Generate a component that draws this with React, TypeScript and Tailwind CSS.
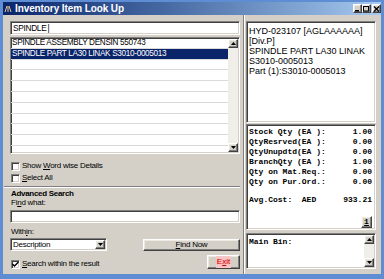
import React from "react";

const sunken =
  "border border-t-[#808080] border-l-[#808080] border-b-white border-r-white shadow-[inset_1px_1px_0_#404040,inset_-1px_-1px_0_#d4d0c8]";
const raised =
  "border border-t-white border-l-white border-b-[#404040] border-r-[#404040] shadow-[inset_-1px_-1px_0_#808080,inset_1px_1px_0_#ece9e2]";

function Arrow({ up }: { up?: boolean }) {
  return (
    <div className={`w-[10px] h-[9px] bg-[#d4d0c8] ${raised} flex items-center justify-center shrink-0`}>
      <svg width="5" height="3" viewBox="0 0 5 3">
        {up ? <path d="M2.5 0 L5 3 L0 3Z" fill="#000" /> : <path d="M0 0 L5 0 L2.5 3Z" fill="#000" />}
      </svg>
    </div>
  );
}

function Check({ checked }: { checked?: boolean }) {
  return (
    <div className={`w-[9px] h-[9px] bg-white ${sunken} flex items-center justify-center shrink-0`}>
      {checked && (
        <svg width="7" height="7" viewBox="0 0 7 7">
          <path d="M0.5 3 L2.5 5 L6.5 1" stroke="#000" strokeWidth="1.4" fill="none" />
        </svg>
      )}
    </div>
  );
}

function TitleBtn({ kind }: { kind: "min" | "max" | "close" }) {
  return (
    <div className={`w-[9px] h-[9px] bg-[#d4d0c8] ${raised} flex items-center justify-center`}>
      <svg width="7" height="6" viewBox="0 0 7 6">
        {kind === "min" && <rect x="1" y="4" width="4" height="1.5" fill="#000" />}
        {kind === "max" && (
          <rect x="0.5" y="0.5" width="5" height="4.5" fill="none" stroke="#000" strokeWidth="1" />
        )}
        {kind === "close" && (
          <path d="M1 0.5 L6 5.5 M6 0.5 L1 5.5" stroke="#000" strokeWidth="1.3" />
        )}
      </svg>
    </div>
  );
}

const rows = [
  "SPINDLE ASSEMBLY DENSIN 550743",
  "SPINDLE PART LA30 LINAK S3010-0005013",
  "",
  "",
  "",
  "",
  "",
  "",
  "",
  "",
];

const stats: [string, string][] = [
  ["Stock Qty (EA ):", "1.00"],
  ["QtyResrved(EA ):", "0.00"],
  ["QtyUnupdtd(EA ):", "0.00"],
  ["BranchQty (EA ):", "1.00"],
  ["Qty on Mat.Req.:", "0.00"],
  ["Qty on Pur.Ord.:", "0.00"],
];

export default function App() {
  return (
    <div className="w-[384px] h-[279px] bg-[#5f8dd3] flex flex-col px-[3px] pt-[2px] pb-[5px] overflow-hidden font-['Liberation_Sans',Arial,sans-serif] text-black">
      {/* Title bar */}
      <div className="h-[13px] shrink-0 flex items-center bg-gradient-to-r from-[#0a246a] to-[#a6caf0]">
        <svg width="8" height="8" viewBox="0 0 8 8" className="ml-[1px]">
          <path d="M1 7 L3 1 M4 7 L4 1 M7 7 L5 1" stroke="#e8c890" strokeWidth="1" />
        </svg>
        <span className="ml-[3px] text-white font-bold text-[10px] leading-none tracking-[-0.1px]">
          Inventory Item Look Up
        </span>
        <div className="ml-auto flex items-center">
          <TitleBtn kind="min" />
          <TitleBtn kind="max" />
          <div className="w-[1px]" />
          <TitleBtn kind="close" />
        </div>
      </div>

      {/* Body */}
      <div className="flex-1 bg-[#d4d0c8] flex">
        {/* Left column */}
        <div className="w-[240px] shrink-0 flex flex-col pl-[7px] pr-[3px] pt-[6px]">
          <div className={`h-[14px] w-[230px] bg-white ${sunken} flex items-center pl-[2px] text-[8.3px] tracking-[-0.3px]`}>
            SPINDLE<span className="ml-[1px] font-light">|</span>
          </div>

          <div className={`mt-[2px] h-[117px] w-[230px] bg-white ${sunken} flex overflow-hidden`}>
            <div className="flex-1 flex flex-col">
              {rows.map((r, i) => (
                <div
                  key={i}
                  className={`h-[10.8px] shrink-0 flex items-center pl-[1px] text-[8.2px] tracking-[-0.32px] whitespace-nowrap border-b border-[#dadada] ${
                    i === 1 ? "bg-[#0a246a] text-white" : ""
                  }`}
                >
                  {r}
                </div>
              ))}
            </div>
            <div className="w-[10px] bg-[#efeee9] flex flex-col justify-between mt-[1px] mr-[1px] mb-[1px]">
              <Arrow up />
              <Arrow />
            </div>
          </div>

          <div className="mt-[7px] h-[10px] flex items-center gap-[2px] pl-[1px] text-[8px] tracking-[-0.25px]">
            <Check />
            <span>
              Show <span className="underline">W</span>ord wise Details
            </span>
          </div>
          <div className="mt-[2px] h-[10px] flex items-center gap-[2px] pl-[1px] text-[8px] tracking-[-0.25px]">
            <Check />
            <span>
              <span className="underline">S</span>elect All
            </span>
          </div>

          <div className="mt-[3px] -ml-[6px] h-[2px] border-t border-[#808080] border-b border-b-white" />

          <div className="mt-[1px] h-[9px] flex items-center pl-[1px] text-[8px] font-bold tracking-[-0.3px] leading-none">
            Advanced Search
          </div>
          <div className="h-[9px] flex items-center pl-[1px] text-[8px] tracking-[-0.25px] leading-none">
            Fi<span className="underline">n</span>d what:
          </div>
          <div className={`mt-[3px] h-[13px] w-[230px] bg-white ${sunken}`} />
          <div className="mt-[4px] h-[9px] flex items-center pl-[1px] text-[8px] tracking-[-0.25px] leading-none">
            With<span className="underline">i</span>n:
          </div>

          <div className="mt-[2px] h-[13px] w-[230px] flex items-center">
            <div className={`w-[97px] h-[13px] bg-white ${sunken} flex items-center pl-[2px] pr-[1px] text-[8px] tracking-[-0.25px]`}>
              <span className="flex-1">Description</span>
              <Arrow />
            </div>
            <div className={`ml-auto w-[97px] h-[12px] bg-[#d4d0c8] ${raised} flex items-center justify-center text-[8px] tracking-[-0.25px]`}>
              <span>
                <span className="underline">F</span>ind Now
              </span>
            </div>
          </div>

          <div className="mt-[4px] h-[14px] w-[230px] flex items-center">
            <div className="flex items-center gap-[2px] pl-[1px] text-[8px] tracking-[-0.25px] mt-[4px]">
              <Check checked />
              <span>
                <span className="underline">S</span>earch within the result
              </span>
            </div>
            <div className={`ml-auto w-[33px] h-[14px] bg-[#d4d0c8] ${raised} flex items-center justify-center text-[8px]`}>
              <span className="text-[#d00000] bg-[#f6c8c8] px-[1px] [text-shadow:0_0_2px_#ff9a9a]">
                E<span className="underline">x</span>it
              </span>
            </div>
          </div>
        </div>

        {/* Right column */}
        <div className="flex-1 flex flex-col border-l border-l-[#808080] shadow-[inset_1px_0_0_white] pl-[2px] pr-[5px] pt-[6px]">
          <div className={`h-[102px] bg-white ${sunken} pl-[2px] pt-[4px] text-[9px] leading-[10px] tracking-[0px] whitespace-nowrap`}>
            <div>HYD-023107 [AGLAAAAAA]</div>
            <div>[Div.P]</div>
            <div>SPINDLE PART LA30 LINAK</div>
            <div>S3010-0005013</div>
            <div>Part (1):S3010-0005013</div>
          </div>

          <div className={`mt-[1px] h-[106px] bg-white ${sunken} flex flex-col pl-[2px] pr-[3px] pt-[2px] font-['Liberation_Mono','Courier_New',monospace] font-bold text-[8px] leading-[10px]`}>
            {stats.map(([k, v]) => (
              <div key={k} className="flex justify-between whitespace-pre">
                <span>{k}</span>
                <span>{v}</span>
              </div>
            ))}
            <div className="mt-[8px] flex whitespace-pre">
              <span>{"Avg.Cost:  AED"}</span>
              <span className="ml-auto">933.21</span>
            </div>
            <div className="mt-auto mb-[1px] flex justify-end">
              <div className={`w-[11px] h-[12px] bg-[#d4d0c8] ${raised} flex items-center justify-center text-[8px] leading-none`}>
                <span className="underline">1</span>
              </div>
            </div>
          </div>

          <div className={`mt-[3px] h-[36px] bg-white ${sunken} flex`}>
            <div className="flex-1 pl-[2px] pt-[3px] font-['Liberation_Mono','Courier_New',monospace] font-bold text-[8px] leading-[10px]">
              Main Bin:
            </div>
            <div className="w-[10px] bg-[#efeee9] flex flex-col justify-between m-[1px]">
              <Arrow up />
              <Arrow />
            </div>
          </div>
        </div>
      </div>
    </div>
  );
}
